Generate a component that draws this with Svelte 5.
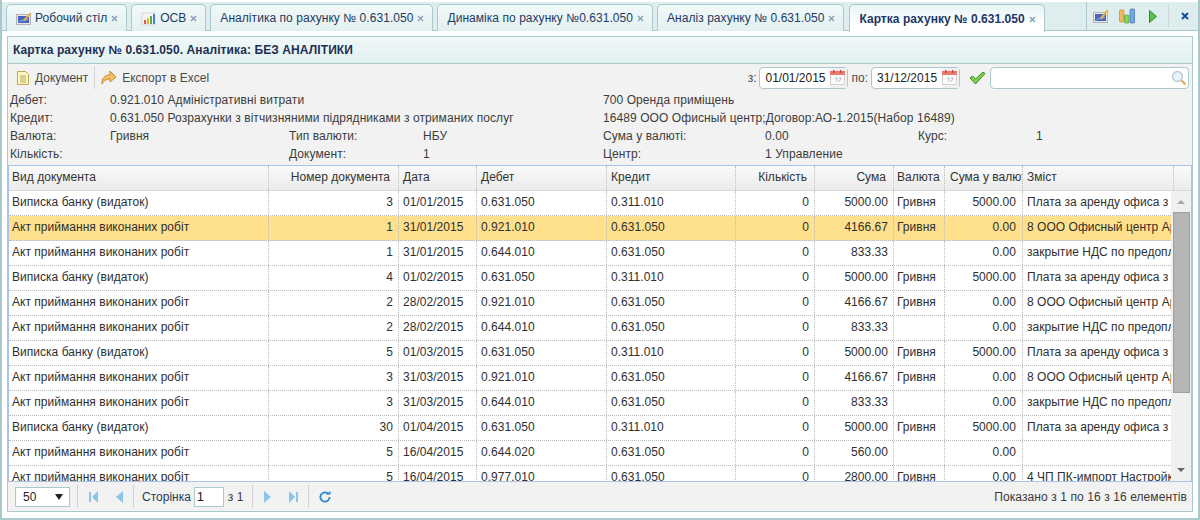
<script>
  const tabs = [
    { title: "Робочий стіл", icon: "desk" },
    { title: "ОСВ", icon: "chart" },
    { title: "Аналітика по рахунку № 0.631.050" },
    { title: "Динаміка по рахунку №0.631.050" },
    { title: "Аналіз рахунку № 0.631.050" },
    { title: "Картка рахунку № 0.631.050", active: true }
  ];

  const bank = "Виписка банку (видаток)";
  const act = "Акт приймання виконаних робіт";
  const rent = "Плата за аренду офиса з";
  const office = "8 ООО Офисный центр Ар";
  const vat = "закрытие НДС по предопл";

  const rows = [
    [bank, 3, "01/01/2015", "0.631.050", "0.311.010", 0, "5000.00", "Гривня", "5000.00", rent],
    [act, 1, "31/01/2015", "0.921.010", "0.631.050", 0, "4166.67", "Гривня", "0.00", office],
    [act, 1, "31/01/2015", "0.644.010", "0.631.050", 0, "833.33", "", "0.00", vat],
    [bank, 4, "01/02/2015", "0.631.050", "0.311.010", 0, "5000.00", "Гривня", "5000.00", rent],
    [act, 2, "28/02/2015", "0.921.010", "0.631.050", 0, "4166.67", "Гривня", "0.00", office],
    [act, 2, "28/02/2015", "0.644.010", "0.631.050", 0, "833.33", "", "0.00", vat],
    [bank, 5, "01/03/2015", "0.631.050", "0.311.010", 0, "5000.00", "Гривня", "5000.00", rent],
    [act, 3, "31/03/2015", "0.921.010", "0.631.050", 0, "4166.67", "Гривня", "0.00", office],
    [act, 3, "31/03/2015", "0.644.010", "0.631.050", 0, "833.33", "", "0.00", vat],
    [bank, 30, "01/04/2015", "0.631.050", "0.311.010", 0, "5000.00", "Гривня", "5000.00", rent],
    [act, 5, "16/04/2015", "0.644.020", "0.631.050", 0, "560.00", "", "0.00", ""],
    [act, 5, "16/04/2015", "0.977.010", "0.631.050", 0, "2800.00", "Гривня", "0.00", "4 ЧП ПК-импорт Настройк"]
  ];

  const columns = ["Вид документа", "Номер документа", "Дата", "Дебет", "Кредит", "Кількість", "Сума", "Валюта", "Сума у валюті", "Зміст"];
  const rightAligned = [1, 5, 6, 8];
</script>

<div class="app">
  <div class="tabstrip">
    <div class="tabs">
      {#each tabs as tab}
        <div class="tab" class:active={tab.active}>
          {#if tab.icon === "desk"}
            <svg width="16" height="16" viewBox="0 0 16 16"><rect x="0.5" y="4.5" width="14" height="10" fill="#e8e8e8" stroke="#b5b5b5"/><rect x="2" y="6" width="11" height="7" fill="#4a63c0"/><path d="M3 12l3-2 2 1 4-2" stroke="#8fb0e8" fill="none"/><path d="M7 10L14 2.5l1.5 1L9 11z" fill="#e8b24a"/></svg>
          {:else if tab.icon === "chart"}
            <svg width="16" height="16" viewBox="0 0 16 16"><rect x="1" y="3" width="13" height="12" fill="#f4f4f4" stroke="#d8d8d8"/><rect x="3" y="10" width="2" height="4" fill="#e05a4a"/><rect x="6" y="8" width="2" height="6" fill="#e8b030"/><rect x="9" y="6" width="2" height="8" fill="#50b050"/><rect x="12" y="4" width="2" height="10" fill="#4a80d0"/></svg>
          {/if}
          <span>{tab.title}</span>
          <svg class="close" width="7" height="7" viewBox="0 0 7 7"><path d="M1 1l5 5M6 1L1 6" stroke="#7f99b5" stroke-width="1.2"/></svg>
        </div>
      {/each}
    </div>
    <div class="strip-tools">
      <svg width="16" height="16" viewBox="0 0 16 16"><rect x="0.5" y="4.5" width="14" height="10" fill="#e8e8e8" stroke="#b5b5b5"/><rect x="2" y="6" width="11" height="7" fill="#4a63c0"/><path d="M3 12l3-2 2 1 4-2" stroke="#8fb0e8" fill="none"/><path d="M7 10L14 1.5l1.5 1L9 11z" fill="#e8b24a"/></svg>
      <svg class="bars" width="16" height="16" viewBox="0 0 16 16"><rect x="0.5" y="2" width="4.5" height="12" rx="1" fill="#f0b860" stroke="#c88a30" stroke-width="0.7"/><rect x="5.5" y="7" width="4.5" height="8" rx="1" fill="#90d060" stroke="#50a030" stroke-width="0.7"/><rect x="11" y="1" width="4.5" height="14" rx="1" fill="#70a8e0" stroke="#3a70b8" stroke-width="0.7"/></svg>
      <svg class="play" width="8" height="13" viewBox="0 0 8 13"><path d="M.5 .5l7 6-7 6z" fill="#5cc04a" stroke="#2c8a2c"/></svg>
      <span class="tool-sep"></span>
      <svg class="shut" width="8" height="8" viewBox="0 0 8 8"><path d="M1 1l6 6M7 1L1 7" stroke="#1050a8" stroke-width="2"/></svg>
    </div>
  </div>

  <div class="panel">
    <div class="panel-title">Картка рахунку № 0.631.050. Аналітика: БЕЗ АНАЛІТИКИ</div>

    <div class="toolbar">
      <button class="tool">
        <svg width="14" height="16" viewBox="0 0 14 16"><path d="M1.5 1.5h8l3 3v10h-11z" fill="#fdf6c0" stroke="#bda85a"/><path d="M4 6h6M4 8h6M4 10h6M4 12h6" stroke="#b8a860"/></svg>
        Документ
      </button>
      <span class="sep"></span>
      <button class="tool">
        <svg width="16" height="15" viewBox="0 0 16 15"><path d="M1 14C1 8 4 5 9 5V1l6 6-6 5V9C6 9 3 10 1 14z" fill="#f5c060" stroke="#c08a30"/></svg>
        Експорт в Excel
      </button>
      <div class="filters">
        <span class="date-label">з:</span>
        <div class="date"><span>01/01/2015</span><i class="cal"><svg width="15" height="15" viewBox="0 0 15 15"><rect x="0.5" y="2.5" width="14" height="12" fill="#fafafa" stroke="#d8d0d0"/><rect x="0" y="1" width="15" height="4" fill="#e87a70"/><rect x="3" y="0" width="1.5" height="3" fill="#c05048"/><rect x="10" y="0" width="1.5" height="3" fill="#c05048"/><path d="M5 8h2v4M9 8h2l-2 4" stroke="#bbb" fill="none"/></svg></i></div>
        <span class="date-label">по:</span>
        <div class="date"><span>31/12/2015</span><i class="cal"><svg width="15" height="15" viewBox="0 0 15 15"><rect x="0.5" y="2.5" width="14" height="12" fill="#fafafa" stroke="#d8d0d0"/><rect x="0" y="1" width="15" height="4" fill="#e87a70"/><rect x="3" y="0" width="1.5" height="3" fill="#c05048"/><rect x="10" y="0" width="1.5" height="3" fill="#c05048"/><path d="M5 8h2v4M9 8h2l-2 4" stroke="#bbb" fill="none"/></svg></i></div>
        <svg class="check" width="17" height="14" viewBox="0 0 17 14"><path d="M1 7l2.5-2 3 3L14 1l2 1.5L6.5 13z" fill="#7ed04a" stroke="#3a8a30"/></svg>
        <div class="search">
          <svg width="16" height="16" viewBox="0 0 16 16"><circle cx="6.5" cy="6.5" r="5" fill="#e8f2fa" stroke="#b8ccdc" stroke-width="1.4"/><path d="M10.5 10.5l4 4" stroke="#e0b060" stroke-width="2.4"/></svg>
        </div>
      </div>
    </div>

    <div class="info">
      <div class="info-row"><span class="c1">Дебет:</span><span class="c2 wide">0.921.010 Адміністративні витрати</span><span class="c5">700 Оренда приміщень</span></div>
      <div class="info-row"><span class="c1">Кредит:</span><span class="c2 wide">0.631.050 Розрахунки з вітчизняними підрядниками з отриманих послуг</span><span class="c5">16489 ООО Офисный центр;Договор:АО-1.2015(Набор 16489)</span></div>
      <div class="info-row"><span class="c1">Валюта:</span><span class="c2">Гривня</span><span class="c3">Тип валюти:</span><span class="c4">НБУ</span><span class="c5 short">Сума у валюті:</span><span class="c6">0.00</span><span class="c7">Курс:</span><span>1</span></div>
      <div class="info-row"><span class="c1">Кількість:</span><span class="c2"></span><span class="c3">Документ:</span><span class="c4">1</span><span class="c5 short">Центр:</span><span>1 Управление</span></div>
    </div>

    <div class="grid">
      <div class="grid-head">
        {#each columns as col, i}
          <div class="cell col{i}" class:right={rightAligned.includes(i)}>{col}</div>
        {/each}
        <div class="head-end"></div>
      </div>
      <div class="grid-body">
        <div class="rows">
          {#each rows as row, r}
            <div class="row" class:selected={r === 1}>
              {#each row as value, i}
                <div class="cell col{i}" class:right={rightAligned.includes(i)}>{value}</div>
              {/each}
            </div>
          {/each}
        </div>
        <div class="scrollbar">
          <span class="arrow up"></span>
          <div class="track"><div class="thumb"></div></div>
          <span class="arrow down"></span>
        </div>
      </div>
    </div>

    <div class="pager">
      <div class="page-size"><span>50</span><i></i></div>
      <span class="sep s1"></span>
      <svg class="first" width="9" height="12" viewBox="0 0 9 12"><rect x="0" y="1" width="2" height="10" fill="#8cc4ea"/><path d="M9 0v12L3 6z" fill="#8cc4ea"/></svg>
      <svg class="prev" width="8" height="12" viewBox="0 0 8 12"><path d="M8 0v12L1 6z" fill="#8cc4ea"/></svg>
      <span class="sep s2"></span>
      <span class="page-word">Сторінка</span>
      <div class="page-input">1</div>
      <span class="page-of">з 1</span>
      <span class="sep s3"></span>
      <svg class="next" width="8" height="12" viewBox="0 0 8 12"><path d="M0 0v12L7 6z" fill="#8cc4ea"/></svg>
      <svg class="last" width="9" height="12" viewBox="0 0 9 12"><path d="M0 0v12L6 6z" fill="#8cc4ea"/><rect x="7" y="1" width="2" height="10" fill="#8cc4ea"/></svg>
      <span class="sep s4"></span>
      <svg class="refresh" width="12" height="12" viewBox="0 0 12 12"><path d="M9.6 3.2A4.6 4.6 0 1 0 10.6 6" fill="none" stroke="#2a88d0" stroke-width="1.8"/><path d="M7 3.5h4.5V0z" fill="#2a88d0"/></svg>
      <span class="summary">Показано з 1 по 16 з 16 елементів</span>
    </div>
  </div>
</div>

<style>
  :global(body) {
    margin: 0;
    background: #a9c9cd;
    font-family: "Liberation Sans", Arial, sans-serif;
    font-size: 12px;
    color: #2b2b2b;
  }

  .app {
    box-sizing: border-box;
    width: 1196px;
    height: 518px;
    margin-left: 2px;
    background: #fff;
    padding-bottom: 6px;
    display: flex;
    flex-direction: column;
  }

  .tabstrip {
    box-sizing: border-box;
    height: 29px;
    margin-top: 2px;
    background: #deeeee;
    border-bottom: 1px solid #a9c9cd;
    display: flex;
    justify-content: space-between;
    flex: none;
  }

  .tabs {
    display: flex;
    gap: 4px;
    padding: 2px 0 0 4px;
  }

  .tab {
    box-sizing: border-box;
    height: 27px;
    padding: 0 8px 0 9px;
    display: flex;
    align-items: center;
    gap: 3px;
    border: 1px solid #a9c9cd;
    border-bottom: none;
    border-radius: 5px 5px 0 0;
    background: linear-gradient(#f2f9f9, #e3f0f1);
    color: #233a63;
    white-space: nowrap;
    letter-spacing: 0.05px;
  }

  .tab .close { margin: 1px 0 0 1px; }

  .tab.active {
    height: 28px;
    margin-left: 1px;
    background: linear-gradient(#e8f4f5, #ffffff 70%);
    color: #1b3768;
    font-weight: bold;
  }

  .strip-tools {
    box-sizing: border-box;
    width: 112px;
    display: flex;
    align-items: center;
    padding: 0 0 0 6px;
    border-left: 1px solid #a9c9cd;
  }

  .bars { margin-left: 10px; }
  .play { margin-left: 14px; }

  .tool-sep {
    width: 1px;
    height: 24px;
    background: #cfd8d8;
    margin-left: 11px;
  }

  .shut { margin-left: 12px; }

  .panel {
    flex: 1;
    min-height: 0;
    margin: 5px 5px 0 5px;
    border: 1px solid #a9c9cd;
    background: #f2f2f2;
    display: flex;
    flex-direction: column;
  }

  .panel-title {
    flex: none;
    box-sizing: border-box;
    height: 27px;
    line-height: 26px;
    padding-left: 5px;
    font-weight: bold;
    letter-spacing: 0.1px;
    color: #1d2f52;
    background: linear-gradient(#f0f8f8, #e2f0f0);
    border-bottom: 1px solid #a9c9cd;
  }

  .toolbar {
    flex: none;
    height: 27px;
    display: flex;
    align-items: center;
    padding-left: 8px;
    color: #4a4a4a;
  }

  .tool {
    display: flex;
    align-items: center;
    gap: 5px;
    border: none;
    background: none;
    padding: 0;
    font: inherit;
    color: inherit;
  }

  .sep {
    width: 1px;
    height: 23px;
    background: #d3d3d3;
    margin: 0 6px;
  }

  .filters {
    margin-left: auto;
    display: flex;
    align-items: center;
    margin-right: 3px;
  }

  .date-label { margin: 0 3px 0 0; }

  .date {
    box-sizing: border-box;
    width: 89px;
    height: 22px;
    margin-right: 3px;
    display: flex;
    align-items: center;
    justify-content: space-between;
    padding-left: 5px;
    background: #fff;
    border: 1px solid #a9c9cd;
    border-radius: 4px;
    color: #222;
  }

  .cal {
    width: 17px;
    height: 20px;
    display: flex;
    align-items: center;
    background: #f0f0f0;
  }

  .check { margin: 0 4px 0 6px; }

  .search {
    box-sizing: border-box;
    width: 199px;
    height: 22px;
    background: #fff;
    border: 1px solid #a9c9cd;
    border-radius: 4px;
    display: flex;
    align-items: center;
    justify-content: flex-end;
    padding-right: 1px;
  }

  .info {
    flex: none;
    height: 74px;
    padding: 0 0 0 2px;
    color: #3c3c3c;
    letter-spacing: 0.08px;
  }

  .info-row {
    display: flex;
    height: 18px;
    line-height: 18px;
    white-space: nowrap;
  }

  .c1 { width: 100px; }
  .c2 { width: 179px; }
  .c2.wide { width: 493px; }
  .c3 { width: 134px; }
  .c4 { width: 180px; }
  .c5.short { width: 162px; }
  .c6 { width: 153px; }
  .c7 { width: 118px; }

  .grid {
    flex: 1;
    min-height: 0;
    border: 1px solid #a8c4ea;
    display: flex;
    flex-direction: column;
    background: #fff;
    letter-spacing: 0.03px;
  }

  .grid-head {
    flex: none;
    height: 24px;
    display: flex;
    background: linear-gradient(#fafafa, #ebebeb);
    border-bottom: 1px solid #d8d8d8;
    color: #333;
    line-height: 23px;
  }

  .head-end { flex: 1; }

  .grid-body {
    flex: 1;
    min-height: 0;
    display: flex;
    overflow: hidden;
  }

  .rows {
    width: 1162px;
    flex: none;
    overflow: hidden;
  }

  .row {
    display: flex;
    box-sizing: border-box;
    height: 25px;
    line-height: 23px;
    border-bottom: 1px dotted #bcbcbc;
    color: #2f2f2f;
  }

  .row.selected { background: #ffe08c; }

  .cell {
    box-sizing: border-box;
    flex: none;
    padding: 0 4px;
    white-space: nowrap;
    overflow: hidden;
    border-right: 1px dotted #bcbcbc;
  }

  .cell.col0 { padding-left: 3px; }
  .cell.col7 { padding-left: 3px; }
  .cell.right { text-align: right; padding-right: 5px; }
  .row .cell.col8 { padding-right: 6px; }

  .grid-head .cell.right { padding-right: 7px; }
  .grid-head .cell.col1 { padding-right: 8px; }

  .col0 { width: 260px; }
  .col1 { width: 130px; }
  .col2 { width: 78px; }
  .col3 { width: 130px; }
  .col4 { width: 129px; }
  .col5 { width: 79px; }
  .col6 { width: 79px; }
  .col7 { width: 51px; }
  .col8 { width: 78px; }
  .col9 { width: 148px; border-right: none; }

  .grid-head .col9 { width: 151px; border-right: 1px dotted #bcbcbc; }
  .grid-head .cell.col8 { text-align: left; padding-left: 5px; padding-right: 0; }

  .scrollbar {
    flex: 1;
    display: flex;
    flex-direction: column;
    align-items: center;
    background: #f0f0f0;
  }

  .arrow {
    flex: none;
    width: 0;
    height: 4px;
    box-sizing: content-box;
    border-left: 4px solid transparent;
    border-right: 4px solid transparent;
  }

  .arrow.up {
    height: 0;
    border-bottom: 4px solid #a6a6a6;
    margin: 9px 0 8px;
  }

  .arrow.down {
    height: 0;
    border-top: 4px solid #666;
    margin-bottom: 9px;
  }

  .track {
    flex: 1;
    box-sizing: border-box;
    width: 100%;
    padding: 0 1px 0 2px;
  }

  .thumb {
    box-sizing: border-box;
    height: 181px;
    background: #b5b5b5;
    border: 1px solid #a0a0a0;
  }

  .pager {
    flex: none;
    height: 29px;
    display: flex;
    align-items: center;
    padding: 0 5px 0 7px;
    color: #3a3a3a;
  }

  .page-size {
    box-sizing: border-box;
    width: 55px;
    height: 20px;
    display: flex;
    align-items: center;
    justify-content: space-between;
    padding: 0 6px 0 7px;
    background: #fff;
    border: 1px solid #a9c9cd;
    color: #222;
  }

  .page-size i {
    border-left: 4px solid transparent;
    border-right: 4px solid transparent;
    border-top: 6px solid #222;
  }

  .pager .s1 { margin: 0 11px 0 7px; }
  .prev { margin-left: 17px; }
  .pager .s2 { margin: 0 8px 0 10px; }
  .page-word { color: #2b3a55; }

  .page-input {
    box-sizing: border-box;
    width: 30px;
    height: 20px;
    line-height: 18px;
    margin: 0 3px;
    padding-left: 2px;
    background: #fff;
    border: 1px solid #a9c9cd;
    color: #222;
    font-size: 13px;
  }

  .page-of { margin-left: 1px; }
  .pager .s3 { margin: 0 11px 0 9px; }
  .last { margin-left: 17px; }
  .pager .s4 { margin: 0 10px 0 10px; }

  .summary {
    margin-left: auto;
    letter-spacing: 0.09px;
  }
</style>
